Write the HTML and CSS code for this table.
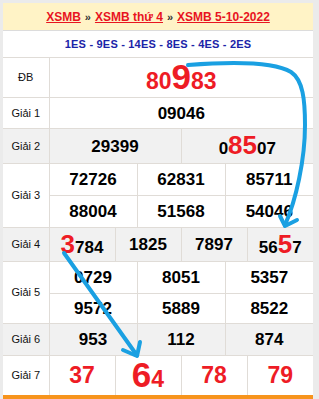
FILE: index.html
```html
<!DOCTYPE html>
<html lang="vi">
<head>
<meta charset="utf-8">
<title>XSMB 5-10-2022</title>
<link rel="stylesheet" href="styles.css">
</head>
<body>
<div class="page">
  <div class="box">
    <div class="crumbs">
      <a href="#">XSMB</a> <span class="sep">»</span> <a href="#">XSMB thứ 4</a> <span class="sep">»</span> <a href="#">XSMB 5-10-2022</a>
    </div>
    <table class="kq">
      <colgroup>
        <col class="c-label">
        <col><col><col><col><col><col><col><col><col><col><col><col>
      </colgroup>
      <tr class="r-code">
        <td colspan="13" class="codes">1ES - 9ES - 14ES - 8ES - 4ES - 2ES</td>
      </tr>
      <tr class="r-db">
        <td class="lbl">ĐB</td>
        <td colspan="12" class="num red big">80<span class="huge">9</span>83</td>
      </tr>
      <tr class="r-g1">
        <td class="lbl">Giải 1</td>
        <td colspan="12" class="num">09046</td>
      </tr>
      <tr class="r-g2 alt">
        <td class="lbl">Giải 2</td>
        <td colspan="6" class="num">29399</td>
        <td colspan="6" class="num">0<span class="hl">85</span>07</td>
      </tr>
      <tr class="r-g3">
        <td class="lbl" rowspan="2">Giải 3</td>
        <td colspan="4" class="num">72726</td>
        <td colspan="4" class="num">62831</td>
        <td colspan="4" class="num">85711</td>
      </tr>
      <tr class="r-g3">
        <td colspan="4" class="num">88004</td>
        <td colspan="4" class="num">51568</td>
        <td colspan="4" class="num">54046</td>
      </tr>
      <tr class="r-g4 alt">
        <td class="lbl">Giải 4</td>
        <td colspan="3" class="num"><span class="hl">3</span>784</td>
        <td colspan="3" class="num">1825</td>
        <td colspan="3" class="num">7897</td>
        <td colspan="3" class="num">56<span class="hl">5</span>7</td>
      </tr>
      <tr class="r-g5a">
        <td class="lbl" rowspan="2">Giải 5</td>
        <td colspan="4" class="num">0729</td>
        <td colspan="4" class="num">8051</td>
        <td colspan="4" class="num">5357</td>
      </tr>
      <tr class="r-g5b">
        <td colspan="4" class="num">9572</td>
        <td colspan="4" class="num">5889</td>
        <td colspan="4" class="num">8522</td>
      </tr>
      <tr class="r-g6 alt">
        <td class="lbl">Giải 6</td>
        <td colspan="4" class="num">953</td>
        <td colspan="4" class="num">112</td>
        <td colspan="4" class="num">874</td>
      </tr>
      <tr class="r-g7">
        <td class="lbl">Giải 7</td>
        <td colspan="3" class="num red big">37</td>
        <td colspan="3" class="num red big"><span class="huge">6</span>4</td>
        <td colspan="3" class="num red big">78</td>
        <td colspan="3" class="num red big">79</td>
      </tr>
    </table>
  </div>
  <svg class="arrows" width="319" height="399" viewBox="0 0 319 399" aria-hidden="true">
    <path d="M188,65 C240,61 276,63 291,72 C303,80 305,100 305,125 C305,160 296,200 285,225" />
    <polyline points="280,216 285,226 297,220" />
    <path d="M64,253 L136,354" />
    <polyline points="123,350 137,356 140,342" />
  </svg>
</div>
</body>
</html>
```
FILE: styles.css
```css
html, body {
  margin: 0;
  padding: 0;
}
body {
  background: #ebebeb;
  font-family: "Liberation Sans", Arial, sans-serif;
}
.page {
  position: relative;
  width: 319px;
  height: 399px;
  overflow: hidden;
}
.box {
  margin: 3px 6px 0 3px;
  background: #fff;
}
.crumbs {
  height: 27px;
  background: #fff3c6;
  border-bottom: 1px solid #dcdcdc;
  display: flex;
  align-items: center;
  justify-content: center;
  gap: 4px;
  font-size: 12px;
  font-weight: bold;
  color: #222;
}
.crumbs a {
  color: #e8141f;
  text-decoration: underline;
}
.crumbs .sep {
  color: #333;
  font-size: 11px;
}
.kq {
  width: 310px;
  table-layout: fixed;
  border-collapse: collapse;
  border-bottom: 4px solid #f7941d;
}
.kq col {
  width: 22px;
}
.kq col.c-label {
  width: 46px;
}
.kq td {
  border: 1px solid #e0dcd7;
  padding: 0;
  text-align: center;
  vertical-align: middle;
  line-height: 1;
}
.kq tr:first-child td {
  border-top: 0;
}
.kq td:first-child {
  border-left: 0;
}
.kq td:last-child {
  border-right: 0;
}
.alt td {
  background: #f1f1f1;
}
.codes {
  height: 26px;
  color: #1b24a8;
  font-size: 11px;
  font-weight: bold;
  letter-spacing: 0.2px;
}
.lbl {
  font-size: 11px;
  color: #111;
}
.num {
  font-size: 17px;
  font-weight: bold;
  color: #000;
}
.red {
  color: #ee1c25;
}
.big {
  font-size: 23px;
}
.huge {
  font-size: 35px;
  line-height: 0.8;
}
.hl {
  color: #ee1c25;
  font-size: 26px;
  line-height: 0.8;
}
.r-db td { height: 39px; }
.r-g1 td { height: 30px; }
.r-g2 td { height: 34px; }
.r-g3 td { height: 31px; }
.r-g4 td { height: 33px; }
.r-g5a td { height: 31px; }
.r-g5b td { height: 29px; }
.r-g6 td { height: 31px; }
.r-g7 td { height: 39px; }
.arrows {
  position: absolute;
  left: 0;
  top: 0;
  pointer-events: none;
}
.arrows path, .arrows polyline {
  fill: none;
  stroke: #1aa0e2;
  stroke-width: 4;
  stroke-linecap: round;
  stroke-linejoin: round;
}
```
